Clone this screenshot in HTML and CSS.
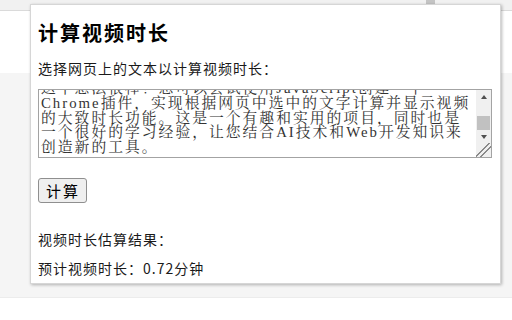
FILE: index.html
```html
<!DOCTYPE html>
<html lang="zh-CN">
<head>
<meta charset="utf-8">
<title>计算视频时长</title>
<link rel="stylesheet" href="styles.css">
</head>
<body>
<div class="page">
  <div class="toolbar"><span class="tb-close"></span></div>
  <div class="hero"></div>
  <div class="content"></div>
  <div class="footer"></div>
</div>
<div class="popup">
  <h2 class="title">计算视频时长</h2>
  <p class="label">选择网页上的文本以计算视频时长：</p>
  <div class="field">
    <textarea class="input" id="text">您好！下面是我为您整理的项目简介。开发浏览器扩展是学习前端技术的好方法，您可以从中了解清单文件、弹出页面、内容脚本以及它们之间如何传递消息。
这个想法很棒！您可以尝试使用JavaScript创建一个Chrome插件，实现根据网页中选中的文字计算并显示视频的大致时长功能。这是一个有趣和实用的项目，同时也是一个很好的学习经验，让您结合AI技术和Web开发知识来创造新的工具。</textarea>
    <div class="sb" aria-hidden="true">
      <span class="sb-btn"><span class="arrow-up"></span></span>
      <span class="sb-track"><span class="sb-thumb"></span></span>
      <span class="sb-btn"><span class="arrow-down"></span></span>
      <span class="sb-corner"></span>
    </div>
  </div>
  <button class="btn" type="button">计算</button>
  <p class="result-title">视频时长估算结果：</p>
  <p class="result">预计视频时长：0.72分钟</p>
</div>
<script src="script.js"></script>
</body>
</html>
```
FILE: styles.css
```css
html, body {
  margin: 0;
  padding: 0;
}
body {
  width: 512px;
  height: 320px;
  overflow: hidden;
  position: relative;
  background: #ffffff;
  font-family: "Noto Sans CJK SC", "Liberation Sans", sans-serif;
  color: #1a1a1a;
}
.page {
  display: flex;
  flex-direction: column;
  height: 320px;
}
.toolbar {
  height: 10px;
  background: #f1f1f1;
  border-bottom: 1px solid #dadada;
  display: flex;
  justify-content: flex-end;
  padding-right: 77px;
}
.tb-close {
  width: 9px;
  height: 9px;
  margin-top: -5px;
  background: #c4c4c4;
  border-bottom: 1px solid #9a9a9a;
}
.hero {
  height: 62px;
  background: #ffffff;
}
.content {
  height: 224px;
  background: #f5f5f5;
}
.footer {
  flex: 1;
  background: #ffffff;
  border-top: 1px solid #ececec;
}
.popup {
  position: absolute;
  left: 30px;
  top: 4px;
  width: 471px;
  height: 280px;
  box-sizing: border-box;
  background: #ffffff;
  border: 1px solid #d6d6d6;
  box-shadow: 1px 1px 3px rgba(0, 0, 0, 0.28);
  padding: 16px 8px 0 7px;
}
.title {
  margin: 0;
  font-size: 20px;
  font-weight: bold;
  letter-spacing: 2px;
  line-height: 24px;
  color: #000000;
}
.label {
  margin: 13px 0 0;
  font-size: 14px;
  letter-spacing: 1px;
  line-height: 20px;
}
.field {
  position: relative;
  margin: 11px 0 0;
  width: 454px;
  height: 69px;
}
.input {
  display: block;
  margin: 0;
  width: 454px;
  height: 69px;
  box-sizing: border-box;
  border: 1px solid #a3a3a3;
  border-radius: 0;
  padding: 2px 17px 2px 2px;
  font-family: "Liberation Serif", "Noto Serif CJK SC", "Noto Sans CJK SC", serif;
  font-size: 14.8px;
  line-height: 14.7px;
  letter-spacing: 2px;
  color: #333333;
  background: #ffffff;
  resize: none;
  overflow-y: scroll;
  scrollbar-width: none;
}
.sb {
  position: absolute;
  top: 1px;
  right: 1px;
  bottom: 1px;
  width: 15px;
  display: flex;
  flex-direction: column;
  background: #f0f0f0;
}
.sb-btn {
  height: 13px;
  display: flex;
  align-items: center;
  justify-content: center;
}
.arrow-up {
  width: 0;
  height: 0;
  border-left: 3.5px solid transparent;
  border-right: 3.5px solid transparent;
  border-bottom: 4px solid #505050;
}
.arrow-down {
  width: 0;
  height: 0;
  border-left: 3.5px solid transparent;
  border-right: 3.5px solid transparent;
  border-top: 4px solid #505050;
}
.sb-track {
  flex: 1;
  display: flex;
  flex-direction: column;
  justify-content: flex-end;
  padding: 0 1px;
}
.sb-thumb {
  height: 14px;
  background: #c1c1c1;
}
.sb-corner {
  height: 14px;
  background-color: #f0f0f0;
  background-image: linear-gradient(135deg, transparent 9px, #8a8a8a 9px, #8a8a8a 10px, transparent 10px, transparent 12.5px, #8a8a8a 12.5px, #8a8a8a 13.5px, transparent 13.5px);
}
.btn {
  display: block;
  margin: 20px 0 0;
  height: 25px;
  padding: 0 6px 0 7px;
  font-family: "Noto Sans CJK SC", sans-serif;
  font-size: 15px;
  letter-spacing: 2px;
  line-height: 23px;
  color: #000000;
  background: #efefef;
  border: 1px solid #8f8f8f;
  border-radius: 3px;
}
.result-title {
  margin: 26px 0 0;
  font-size: 14px;
  letter-spacing: 1px;
  line-height: 20px;
}
.result {
  margin: 9px 0 0;
  font-size: 14px;
  letter-spacing: 1px;
  line-height: 20px;
}
```
FILE: script.js
```js
var t = document.getElementById('text');
t.scrollTop = t.scrollHeight;
```
